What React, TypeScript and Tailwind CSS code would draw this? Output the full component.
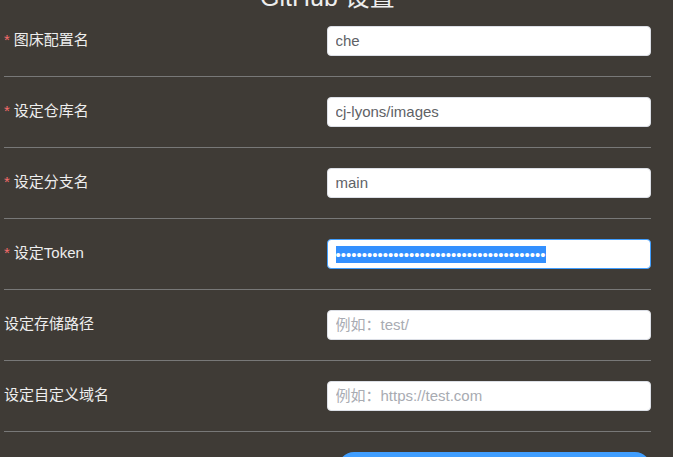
import { useEffect, useRef } from "react";

type Field = {
  id: string;
  label: string;
  required?: boolean;
  type?: string;
  value?: string;
  placeholder?: string;
};

const fields: Field[] = [
  { id: "configName", label: "图床配置名", required: true, value: "che" },
  { id: "repo", label: "设定仓库名", required: true, value: "cj-lyons/images" },
  { id: "branch", label: "设定分支名", required: true, value: "main" },
  { id: "token", label: "设定Token", required: true, type: "password", value: "x".repeat(40) },
  { id: "path", label: "设定存储路径", placeholder: "例如：test/" },
  { id: "customUrl", label: "设定自定义域名", placeholder: "例如：https://test.com" },
];

export default function App() {
  const tokenRef = useRef<HTMLInputElement>(null);

  useEffect(() => {
    tokenRef.current?.focus();
    tokenRef.current?.select();
  }, []);

  return (
    <main className="h-screen overflow-hidden bg-[#3f3b36] pl-1 pr-[22px] font-['Liberation_Sans','Noto_Sans_CJK_SC',sans-serif] text-[15px] text-[#eeeeee]">
      <h1 className="-mt-[21px] mb-[11px] text-center text-[25px] leading-9">GitHub 设置</h1>
      <form onSubmit={(e) => e.preventDefault()}>
        {fields.map((field) => (
          <div key={field.id} className="mb-5 flex border-b border-[#787878] pb-5">
            <label htmlFor={field.id} className="flex-1 leading-7">
              {field.required && <span className="mr-1 text-[#f56c6c]">*</span>}
              {field.label}
            </label>
            <input
              id={field.id}
              ref={field.id === "token" ? tokenRef : undefined}
              type={field.type ?? "text"}
              defaultValue={field.value}
              placeholder={field.placeholder}
              required={field.required}
              className="h-[30px] w-[calc(50%+1px)] rounded border border-[#dcdfe6] bg-white px-2 text-[#606266] outline-none selection:bg-[#3390ff] selection:text-white placeholder:text-[#a8abb2] focus:border-[#409eff] [&[type=text]]:pb-0.5"
            />
          </div>
        ))}
        <div className="flex justify-end">
          <button
            type="submit"
            aria-label="确定"
            className="h-8 w-[calc(50%-10px)] rounded-full bg-[#409eff]"
          />
        </div>
      </form>
    </main>
  );
}
